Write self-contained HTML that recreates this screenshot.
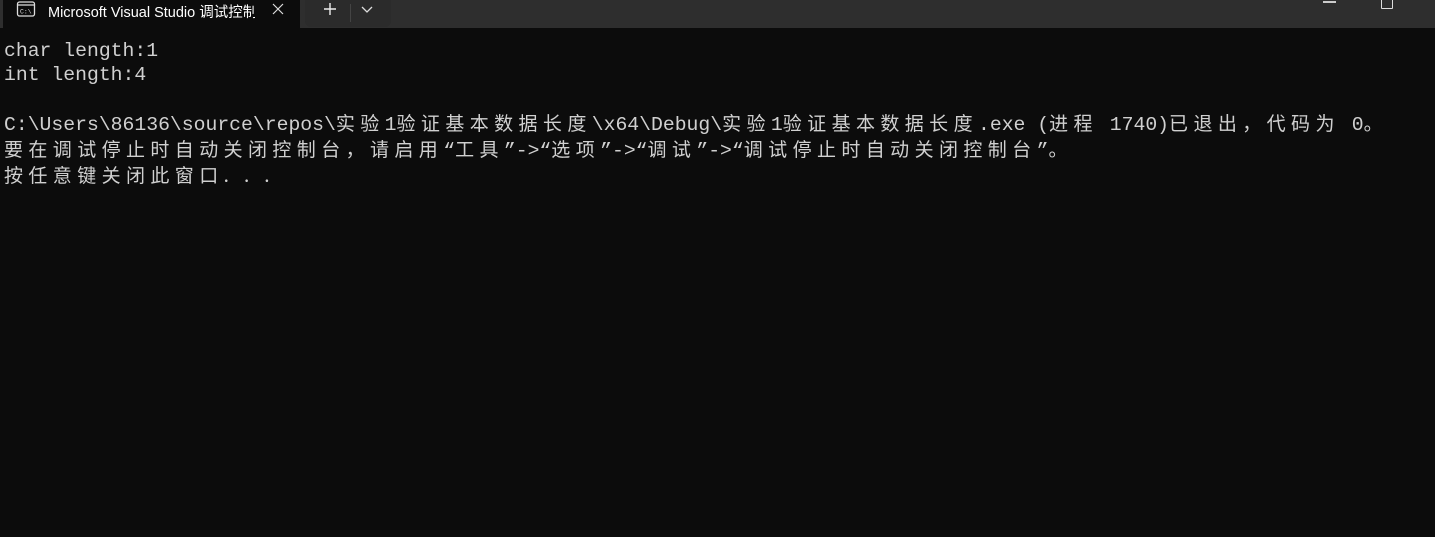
<!DOCTYPE html>
<html><head><meta charset="utf-8"><style>
body{margin:0;width:1435px;height:537px;background:#0c0c0c;overflow:hidden;font-family:"Liberation Sans","Noto Sans CJK SC",sans-serif}
.bar{position:absolute;left:0;top:0;width:1435px;height:28px;background:#2e2e2e}
.tab{position:absolute;left:3px;top:0;width:297px;height:28px;background:#0c0c0c}
.tt{position:absolute;left:48px;top:1px;color:#fff;font-size:14.5px;white-space:nowrap;width:207px;overflow:hidden}
.nb{position:absolute;left:305px;top:0;width:86px;height:27px;background:#2b2b2b;border-radius:0 0 6px 6px}
.con{position:absolute;left:4px;top:39px;color:#d0d0d0;font-family:"Liberation Mono","Noto Sans CJK SC",monospace;font-size:19.75px;line-height:24px;white-space:pre}
.c{font-family:"Noto Sans CJK SC",sans-serif;font-size:19px;letter-spacing:5.4px}
</style></head><body>
<div class="bar"></div>
<div class="tab"></div>
<svg style="position:absolute;left:16px;top:1px" width="20" height="16" viewBox="0 0 20 16"><rect x="1.5" y="1" width="17" height="14" rx="2" fill="none" stroke="#ddd" stroke-width="1.3"/><line x1="1.5" y1="4" x2="18.5" y2="4" stroke="#ddd" stroke-width="1.3"/><text x="4" y="12.5" font-size="6.5" fill="#ddd" font-family="Liberation Mono">C:\</text></svg>
<div class="tt">Microsoft Visual Studio 调试控制台</div>
<svg style="position:absolute;left:271px;top:2px" width="14" height="14"><path d="M2 2L12 12M12 2L2 12" stroke="#ddd" stroke-width="1.2"/></svg>
<div class="nb"></div>
<svg style="position:absolute;left:322px;top:1px" width="16" height="16"><path d="M8 2V14M2 8H14" stroke="#eee" stroke-width="1.4"/></svg>
<div style="position:absolute;left:350px;top:4px;width:1px;height:18px;background:#444"></div>
<svg style="position:absolute;left:360px;top:3px" width="14" height="12"><path d="M2 4L7 9L12 4" stroke="#ddd" fill="none" stroke-width="1.3"/></svg>
<div style="position:absolute;left:1323px;top:1px;width:13px;height:2px;background:#ccc"></div>
<div style="position:absolute;left:1381px;top:-3px;width:10px;height:10px;border:1.4px solid #ddd;border-radius:1px"></div>
<div class="con">char length:1
int length:4

C:\Users\86136\source\repos\<span class="c">实验</span>1<span class="c">验证基本数据长度</span>\x64\Debug\<span class="c">实验</span>1<span class="c">验证基本数据长度</span>.exe (<span class="c">进程</span> 1740)<span class="c">已退出，代码为</span> 0<span class="c">。</span>
<span class="c">要在调试停止时自动关闭控制台，请启用</span>“<span class="c">工具</span>”-&gt;“<span class="c">选项</span>”-&gt;“<span class="c">调试</span>”-&gt;“<span class="c">调试停止时自动关闭控制台</span>”<span class="c">。</span>
<span class="c">按任意键关闭此窗口. . .</span></div>
</body></html>
